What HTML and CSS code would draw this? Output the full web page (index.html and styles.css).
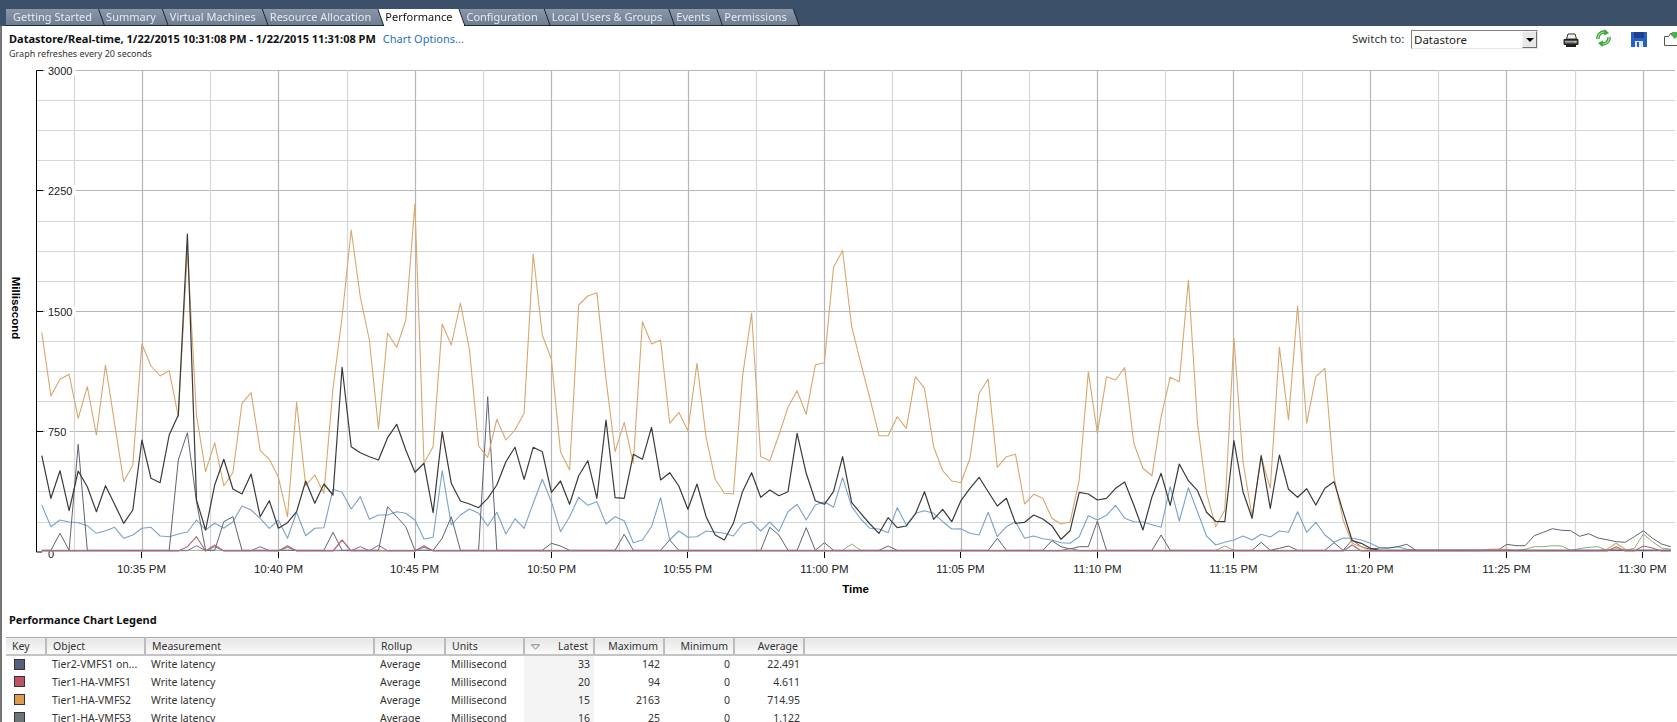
FILE: index.html
```html
<!DOCTYPE html>
<html lang="en">
<head>
    <meta charset="UTF-8">
    <title>Performance</title>
    <link rel="stylesheet" href="styles.css">
</head>
<body>
    <div class="tabbar">
        <div class="tabs">
            <div class="tab">Getting Started</div>
            <div class="tab">Summary</div>
            <div class="tab">Virtual Machines</div>
            <div class="tab">Resource Allocation</div>
            <div class="tab active">Performance</div>
            <div class="tab">Configuration</div>
            <div class="tab">Local Users &amp; Groups</div>
            <div class="tab">Events</div>
            <div class="tab">Permissions</div>
        </div>
    </div>

    <div class="main">
        <div class="header">
            <div class="heading">
                <div class="title-line">
                    <span class="title">Datastore/Real-time, 1/22/2015 10:31:08 PM - 1/22/2015 11:31:08 PM</span>
                    <a class="link">Chart Options...</a>
                </div>
                <div class="note">Graph refreshes every 20 seconds</div>
            </div>
            <div class="toolbar">
                <span class="switch-label">Switch to:</span>
                <div class="combo">
                    <span class="combo-value">Datastore</span>
                    <span class="combo-btn"><i class="caret"></i></span>
                </div>
                <svg class="icon print" viewBox="0 0 16 15">
                    <path d="M5 1h7l1.500 5H3.500z" fill="#f2f2f2" stroke="#333"/>
                    <path d="M1 6.500h14v5H1z" fill="#4a4a4a" stroke="#222"/>
                    <path d="M2 8h12v1.500H2z" fill="#a8a8a8"/>
                    <path d="M11 8h2v1.500h-2z" fill="#d8c85a"/>
                    <path d="M3 11.500h10v2.500H3z" fill="#1f1f1f"/>
                </svg>
                <svg class="icon refresh" viewBox="0 0 17 18">
                    <path d="M3 10A6 6 0 0 1 11 3.500" fill="none" stroke="#2f9a35" stroke-width="3.400"/>
                    <path d="M14 8A6 6 0 0 1 6 14.500" fill="none" stroke="#2f9a35" stroke-width="3.400"/>
                    <path d="M3 10A6 6 0 0 1 11 3.500" fill="none" stroke="#9be08e" stroke-width="1.400"/>
                    <path d="M14 8A6 6 0 0 1 6 14.500" fill="none" stroke="#9be08e" stroke-width="1.400"/>
                    <path d="M9.500 0l4.500 4-5 2.500zM7.500 18L3 14l5-2.500z" fill="#3aa83e"/>
                </svg>
                <svg class="icon save" viewBox="0 0 16 15">
                    <path d="M0 0h16v15H0z" fill="#2460c8"/>
                    <path d="M3 0h10v6H3z" fill="#1a3f8c"/>
                    <path d="M4 9h8v6H4z" fill="#dfe8f6"/>
                    <path d="M6 10h2v5H6z" fill="#2460c8"/>
                </svg>
                <svg class="icon export" viewBox="0 0 16 14">
                    <path d="M.500 4.500h4l2-3h8v12H.500z" fill="#fff" stroke="#555"/>
                    <path d="M7 0h5v3h3l-5 5-5-5h2z" fill="#4bb050" transform="translate(1 -1)"/>
                </svg>
            </div>
        </div>

        <svg id="chart" class="chart" viewBox="2 62 1675 548"></svg>

        <div class="legend-title">Performance Chart Legend</div>
        <table class="legend">
            <colgroup>
                <col class="c-key"><col class="c-object"><col class="c-measure"><col class="c-rollup"><col class="c-units">
                <col class="c-num"><col class="c-num"><col class="c-num"><col class="c-num"><col>
            </colgroup>
            <thead>
                <tr>
                    <th>Key</th><th>Object</th><th>Measurement</th><th>Rollup</th><th>Units</th>
                    <th class="num"><svg class="sort" viewBox="0 0 10 6"><path d="M.500.500h9L5 5.500z" fill="none" stroke="#777"/></svg>Latest</th>
                    <th class="num">Maximum</th><th class="num">Minimum</th><th class="num">Average</th><th></th>
                </tr>
            </thead>
            <tbody>
                <tr>
                    <td><i class="swatch s1"></i></td><td>Tier2-VMFS1 on...</td><td>Write latency</td><td>Average</td><td>Millisecond</td>
                    <td class="num sorted">33</td><td class="num">142</td><td class="num">0</td><td class="num">22.491</td><td></td>
                </tr>
                <tr>
                    <td><i class="swatch s2"></i></td><td>Tier1-HA-VMFS1</td><td>Write latency</td><td>Average</td><td>Millisecond</td>
                    <td class="num sorted">20</td><td class="num">94</td><td class="num">0</td><td class="num">4.611</td><td></td>
                </tr>
                <tr>
                    <td><i class="swatch s3"></i></td><td>Tier1-HA-VMFS2</td><td>Write latency</td><td>Average</td><td>Millisecond</td>
                    <td class="num sorted">15</td><td class="num">2163</td><td class="num">0</td><td class="num">714.95</td><td></td>
                </tr>
                <tr>
                    <td><i class="swatch s4"></i></td><td>Tier1-HA-VMFS3</td><td>Write latency</td><td>Average</td><td>Millisecond</td>
                    <td class="num sorted">16</td><td class="num">25</td><td class="num">0</td><td class="num">1.122</td><td></td>
                </tr>
            </tbody>
        </table>
    </div>

    <script src="chart.js"></script>
</body>
</html>
```

FILE: styles.css
```css
* { box-sizing: border-box; }
html, body { height: 100%; }
body { margin: 0; background-color: #fff; overflow: hidden; font-family: "Noto Sans", "Liberation Sans", sans-serif; font-size: 11px; color: #222; }

/* Tab strip */
.tabbar { height: 26px; background-color: #3c5069; padding: 9px 0 0 6px; }
.tabs { display: flex; filter: drop-shadow(1px 0 0 #141e2c); }
.tab {
    height: 17px;
    line-height: 16px;
    padding: 0 12px 0 7px;
    margin-right: -5px;
    color: #e6e9ee;
    background: linear-gradient(#8a97aa, #6f7d93);
    border-bottom: 1px solid #1c2838;
    clip-path: polygon(0 0, calc(100% - 6px) 0, 100% 100%, 6px 100%);
    white-space: nowrap;
}
.tab:first-child { clip-path: polygon(0 0, calc(100% - 6px) 0, 100% 100%, 0 100%); }
.tab.active { background: #fff; color: #111; border-bottom: none; }

.main { border-left: 2px solid #767676; height: 696px; }

/* Chart header */
.header { display: flex; justify-content: space-between; height: 36px; padding: 5px 0 0 7px; margin-right: -3px; }
.title-line { display: flex; gap: 7px; line-height: 16px; }
.title { font-weight: bold; font-size: 11px; color: #111; }
.link { color: #2a6fc0; }
.note { font-size: 9px; line-height: 11px; margin-top: 1px; color: #333; }
.toolbar { display: flex; align-items: flex-start; }
.switch-label { font-size: 11.500px; line-height: 16px; width: 59px; color: #333; }
.combo { display: flex; justify-content: space-between; width: 127px; height: 19px; margin-top: -1px; border: 1px solid; border-color: #808080 #e6e6e6 #e6e6e6 #808080; background-color: #fff; }
.combo-value { padding: 1px 0 0 2px; font-size: 11.500px; line-height: 16px; }
.combo-btn { display: flex; align-items: center; justify-content: center; width: 15px; background-color: #e8e8e8; border: 1px solid; border-color: #f4f4f4 #707070 #707070 #f4f4f4; }
.caret { border-top: 4px solid #000; border-left: 4px solid transparent; border-right: 4px solid transparent; }
.icon { display: block; flex: none; }
.print { width: 16px; height: 15px; margin: 2px 0 0 25px; }
.refresh { width: 17px; height: 18px; margin: -2px 0 0 16px; }
.save { width: 16px; height: 15px; margin: 1px 0 0 19px; }
.export { width: 16px; height: 14px; margin: 1px 0 0 17px; }

.chart { display: block; width: 1675px; height: 548px; }
.chart text { font-family: "Liberation Sans", Arial, sans-serif; font-size: 11px; fill: #222; }
.chart .axis-title { font-weight: bold; font-size: 11.500px; fill: #000; }
.chart .x-label { font-size: 11.500px; }

/* Legend */
.legend-title { padding: 2px 0 0 7px; height: 27px; font-weight: bold; line-height: 16px; color: #111; }
.legend { table-layout: fixed; border-collapse: collapse; width: 1671px; margin-left: 4px; font-size: 10.500px; color: #333; }
.c-key { width: 40px; }
.c-object { width: 99px; }
.c-measure { width: 229px; }
.c-rollup { width: 71px; }
.c-units { width: 79px; }
.c-num { width: 70px; }
.legend th { height: 17px; padding: 0 5px 0 6px; font-weight: normal; text-align: left; background: linear-gradient(#e6e6e6, #fbfbfb); border-top: 1px solid #a8a8a8; border-bottom: 2px solid #c4c4c4; border-right: 2px solid #bcbcbc; white-space: nowrap; }
.legend th:last-child { border-right: none; }
.legend td { height: 18px; padding: 0 4px 0 6px; white-space: nowrap; overflow: hidden; }
.legend .num { text-align: right; }
.sorted { background-color: #f4f4f4; }
.sort { float: left; width: 9px; height: 6px; margin-top: 5px; }
.swatch { display: block; width: 11px; height: 11px; margin-left: 2px; border: 1px solid #333; }
.s1 { background-color: #5a5f7d; }
.s2 { background-color: #c25262; }
.s3 { background-color: #dc9c4c; }
.s4 { background-color: #6c7478; }
```

FILE: chart.js
```js
// Series traced from a 3x view of the chart: pixel y = 320 + value / 3
var orange = [37,228,178,163,295,200,345,135,310,485,435,72,138,168,152,290,-210,286,455,368,497,458,250,218,392,418,472,590,247,497,465,520,205,-10,-270,-69,60,327,40,82,0,-348,430,380,12,75,-51,90,378,412,298,360,330,280,-198,45,118,
    395,450,-45,-72,-82,178,395,307,430,5,72,60,310,277,332,130,352,478,520,522,170,-20,410,422,345,262,212,283,135,128,-158,-208,20,130,235,347,347,290,325,170,205,380,452,483,488,415,220,177,442,410,403,552,523,535,595,612,606,480,155,340,170,180,
    143,370,445,467,290,172,185,-120,310,520,620,570,55,425,590,410,505,82,300,-42,310,170,145,470,600,670,680];
var black = [407,535,452,572,453,500,575,497,553,610,570,360,475,488,345,285,-258,540,630,495,418,507,522,462,590,542,625,608,575,483,550,492,525,142,380,398,410,420,353,313,390,457,430,578,335,490,543,552,563,535,495,425,382,478,382,395,517,
    483,553,467,422,535,300,533,535,403,418,322,480,458,498,568,492,590,645,660,610,515,458,532,510,527,515,340,460,542,553,515,410,548,580,612,640,593,623,618,582,515,598,568,605,542,505,472,515,558,535,610,607,585,597,617,658,632,517,522,540,535,505,
    486,555,630,530,460,556,432,482,512,577,604,605,362,515,595,407,565,405,508,532,506,555,505,485,575,662,670,685];
var blue = [555,620,600,606,608,617,640,632,622,655,645,625,622,648,650,642,636,600,630,610,625,605,558,570,595,625,600,655,577,647,625,623,508,517,567,530,598,585,585,575,580,600,657,652,452,615,585,567,580,618,577,642,596,625,550,478,545,
    635,590,532,556,545,612,590,602,668,660,620,533,660,633,652,650,633,636,640,648,612,605,633,606,634,575,553,600,555,545,562,473,560,597,625,627,638,563,615,580,572,580,605,627,626,640,645,577,650,620,605,655,648,656,660,668,670,650,587,600,586,556,
    595,605,606,614,622,500,603,503,575,648,675,667,660,648,660,643,651,633,637,575,637,607,645,667,654,655,660,670,683,684,680,688];

// These four sit on the baseline apart from a few spikes
var slate = {2:640,4:373,15:420,16:338,17:545,20:605,21:590,32:637,38:560,39:590,40:620,44:655,45:590,49:230,56:670,57:678,64:643,69:660,80:622,81:645,84:623,86:668,93:678,105:655,111:662,112:680,113:687,114:680,115:680,116:603,123:645,134:667,136:685,137:678,142:668,144:660,145:680,146:688,147:684,148:684,149:680,150:673,
    161:673,162:677,163:677,164:647,165:637,166:626,167:631,168:632,169:649,170:641,171:654,172:659,173:665,174:667,175:650,176:632,177:655,178:672,179:680};
var green = {89:672,130:678,163:688,164:680,165:680,166:677,167:678,169:686,170:682,171:680,173:686,175:685,176:642,177:665,178:684,179:688};
var red = {16:680,17:650,19:675,27:677,33:660,42:677,144:675,173:680,176:678,177:684};
var purple = {17:677,19:680,24:680,27:682,35:680,37:676,42:682,113:685};
var bumps = {159:688,160:687,161:688,172:688,173:670,174:688};

var X0 = 41.8, STEP = 9.1, TOP = 70, ZERO = 551.7, RIGHT = 1675;

function linePoints(values, base) {
    var pts = [];
    for (var i = 0; i < 180; i++) {
        var v = values[i] === undefined ? base : values[i];
        pts.push((X0 + i * STEP).toFixed(1) + "," + (320 + v / 3).toFixed(1));
    }
    return pts.join(" ");
}

function polyline(values, base, color, width) {
    return '<polyline fill="none" stroke="' + color + '" stroke-width="' + width + '" stroke-linejoin="round" points="' + linePoints(values, base) + '"/>';
}

function drawChart() {
    var html = "";
    var hourLabels = ["10:35 PM","10:40 PM","10:45 PM","10:50 PM","10:55 PM","11:00 PM","11:05 PM","11:10 PM","11:15 PM","11:20 PM","11:25 PM","11:30 PM"];
    var yLabels = ["3000","2250","1500","750"];
    var gridStep = (ZERO - TOP) / 16;
    var xStep = 136.45;

    // Horizontal grid, every 4th line is darker and carries a label
    for (var r = 0; r < 16; r++) {
        var y = Math.round(TOP + r * gridStep) + 0.5;
        var major = r % 4 == 0;
        html += '<line x1="37" x2="' + RIGHT + '" y1="' + y + '" y2="' + y + '" stroke="' + (major ? "#b6b6b6" : "#d6d6d6") + '" stroke-width="1.2"/>';
    }
    // Vertical grid
    for (var c = 0; c < 24; c++) {
        var x = Math.round(73.6 + c * xStep / 2) + 0.5;
        var isMajor = c % 2 == 1;
        html += '<line x1="' + x + '" x2="' + x + '" y1="' + TOP + '" y2="552" stroke="' + (isMajor ? "#b6b6b6" : "#d6d6d6") + '" stroke-width="1.2"/>';
    }

    // Axis and labels
    html += '<path d="M42 70.500H36.500V552H42" fill="none" stroke="#000"/>';
    yLabels.forEach(function (label, i) {
        var y = Math.round(TOP + i * 4 * gridStep) + 0.5;
        var width = label.length * 6.2 + 6;
        html += '<rect x="45" y="' + (y - 5) + '" width="' + width + '" height="10" fill="#fff"/>';
        html += '<line x1="37" x2="43" y1="' + y + '" y2="' + y + '" stroke="#000"/>';
        html += '<text x="48" y="' + (y + 4) + '">' + label + '</text>';
    });
    html += '<text x="48" y="558">0</text>';

    hourLabels.forEach(function (label, i) {
        var x = Math.round(141.4 + i * xStep) + 0.5;
        html += '<line x1="' + x + '" x2="' + x + '" y1="552" y2="558" stroke="#000"/>';
        html += '<text class="x-label" x="' + x + '" y="573" text-anchor="middle">' + label + '</text>';
    });
    html += '<text class="axis-title" x="855.500" y="593" text-anchor="middle">Time</text>';
    html += '<text class="axis-title" transform="translate(12 308) rotate(90)" text-anchor="middle">Millisecond</text>';

    // Series
    var withBumps = orange.slice();
    for (var k in bumps) withBumps[k] = bumps[k];
    html += polyline(green, 691, "#8cb070", 1);
    html += polyline(blue, 691, "#7ba2ca", 1.1);
    html += polyline(slate, 691, "#5f6472", 1);
    html += polyline(withBumps, 692, "#d9a76c", 1.1);
    html += polyline(black, 691, "#3a3a3a", 1.2);
    html += polyline(purple, 692, "#7c6aa0", 1);
    html += polyline(red, 693, "#b56a78", 1.2);

    document.getElementById("chart").innerHTML = html;
}

drawChart();
```
